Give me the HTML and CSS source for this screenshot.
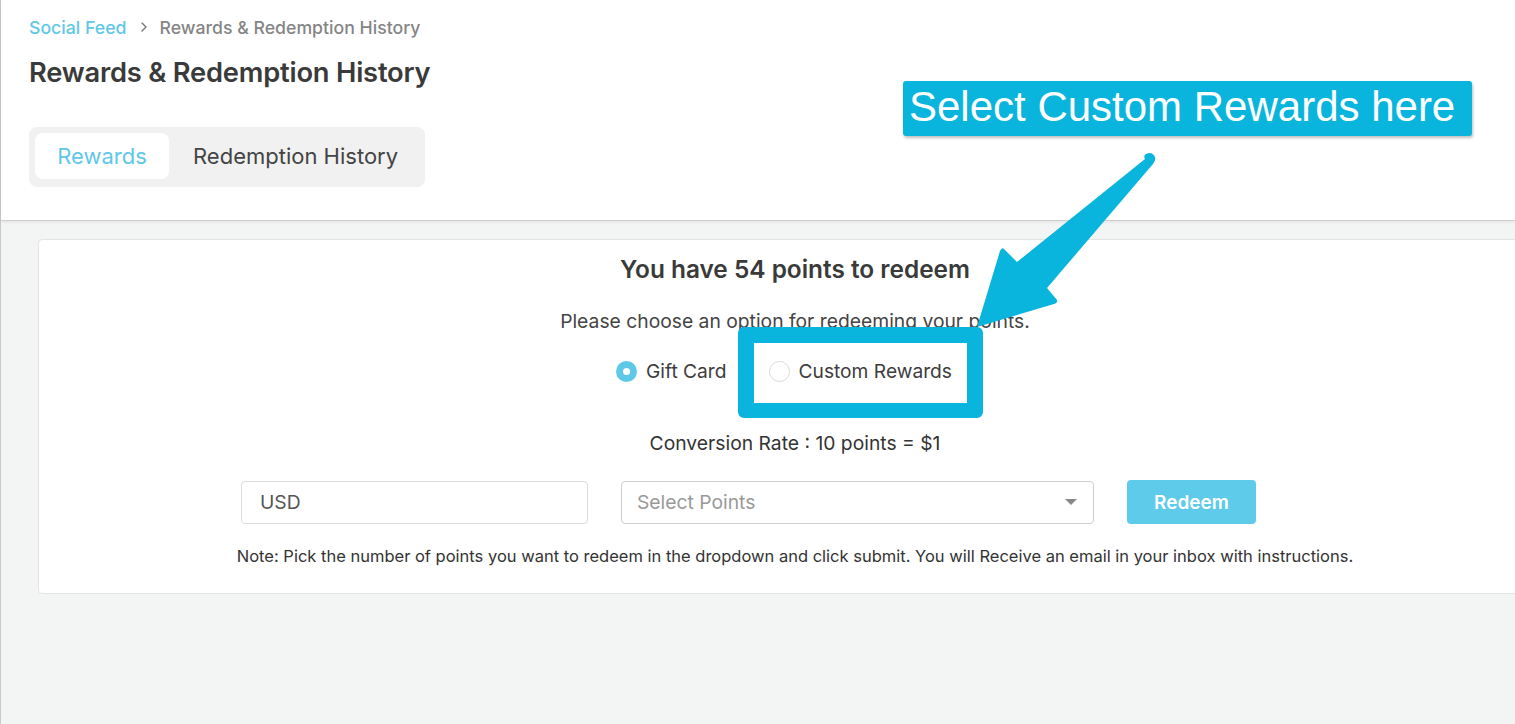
FILE: index.html
```html
<!DOCTYPE html>
<html lang="en">
<head>
<meta charset="utf-8">
<title>Rewards &amp; Redemption History</title>
<link rel="stylesheet" href="styles.css">
</head>
<body>
<div class="page">
  <header class="header">
    <nav class="crumbs">
      <a class="crumb-link" href="#">Social Feed</a>
      <svg class="crumb-sep" width="10" height="12" viewBox="0 0 10 12"><path d="M3 2l4 4-4 4" fill="none" stroke="#777" stroke-width="1.4" stroke-linecap="round" stroke-linejoin="round"/></svg>
      <span class="crumb-current">Rewards &amp; Redemption History</span>
    </nav>
    <h1 class="title">Rewards &amp; Redemption History</h1>
    <div class="tabs">
      <button class="tab tab-active">Rewards</button>
      <button class="tab tab-history">Redemption History</button>
    </div>
  </header>
  <main class="main">
    <section class="card">
      <h2 class="points">You have 54 points to redeem</h2>
      <p class="choose">Please choose an option for redeeming your points.</p>
      <div class="options">
        <label class="option"><span class="radio radio-on"></span>Gift Card</label>
        <label class="option"><span class="radio"></span>Custom Rewards</label>
      </div>
      <p class="rate">Conversion Rate : 10 points = $1</p>
      <div class="form-row">
        <div class="field field-usd">USD</div>
        <div class="field field-select"><span class="placeholder">Select Points</span><span class="caret"></span></div>
        <button class="redeem">Redeem</button>
      </div>
      <p class="note">Note: Pick the number of points you want to redeem in the dropdown and click submit. You will Receive an email in your inbox with instructions.</p>
    </section>
  </main>
</div>
<div class="callout">Select Custom Rewards here</div>
<svg class="arrow" width="1515" height="724" viewBox="0 0 1515 724">
  <path d="M1146 154 Q1152 151 1155 157 Q1156 160 1153 164 L1047 288 L1057 300 Q1058 303 1054 304 L977 327 L1000 251 Q1002 246 1005 250 L1017 262 L1145 159 Q1143 156 1146 154 Z" fill="#09b5dd"/>
</svg>
<div class="highlight"></div>
</body>
</html>
```
FILE: styles.css
```css
* { box-sizing: border-box; }
html, body { margin: 0; padding: 0; }
body {
  width: 1515px;
  height: 724px;
  overflow: hidden;
  font-family: Inter, "Noto Sans", Arial, sans-serif;
  background: #f3f4f4;
  color: #3a3a3a;
  position: relative;
}
.page {
  border-left: 1px solid #c9c9c9;
  min-height: 724px;
}
.header {
  background: #fff;
  height: 221px;
  padding: 15px 0 0 28px;
  border-bottom: 1px solid #cfcfcf;
  box-shadow: 0 1px 3px rgba(0,0,0,0.08);
}
.crumbs {
  display: flex;
  align-items: center;
  height: 24px;
  font-size: 17.7px;
  font-weight: 500;
}
.crumb-link { color: #5fc8e8; text-decoration: none; }
.crumb-sep { margin: 0 11px 0 12px; }
.crumb-current { color: #858585; }
.title {
  margin: 17px 0 0 0;
  font-size: 27.3px;
  font-weight: 600;
  color: #3a3a3a;
  line-height: 34px;
  letter-spacing: -0.2px;
}
.tabs {
  display: inline-flex;
  margin-top: 37px;
  padding: 6px 6px 8px 6px;
  background: #f1f1f1;
  border-radius: 8px;
}
.tab {
  font-family: inherit;
  font-size: 22px;
  border: none;
  background: transparent;
  color: #444;
  height: 46px;
  border-radius: 8px;
}
.tab-active {
  background: #fff;
  color: #5fc8e8;
  width: 134px;
  padding: 0;
}
.tab-history {
  padding: 0 21px 0 24px;
}
.main {
  padding: 18px 0 0 37px;
}
.card {
  width: 1514px;
  height: 355px;
  background: #fff;
  border: 1px solid #e3e3e3;
  border-radius: 4px;
  text-align: center;
  padding-top: 14px;
}
.points {
  margin: 0;
  font-size: 24.4px;
  font-weight: 600;
  line-height: 30px;
  color: #3a3a3a;
}
.choose {
  margin: 25px 0 0 0;
  font-size: 19.3px;
  line-height: 24px;
  color: #444;
}
.options {
  display: flex;
  justify-content: center;
  gap: 42px;
  margin-top: 25px;
  padding-right: 22px;
}
.option {
  display: flex;
  align-items: center;
  gap: 9px;
  font-size: 19.2px;
  line-height: 26px;
  color: #3d3d3d;
}
.radio {
  width: 21px;
  height: 21px;
  border-radius: 50%;
  border: 1px solid #dadada;
  background: #fff;
}
.radio-on {
  border: 7px solid #5fc8e8;
  background: #fff;
}
.rate {
  margin: 47px 0 0 0;
  font-size: 19.3px;
  line-height: 24px;
  color: #333;
}
.form-row {
  display: flex;
  align-items: center;
  gap: 33px;
  margin-top: 25px;
  padding-left: 202px;
}
.field {
  height: 43px;
  border: 1px solid #dcdcdc;
  border-radius: 4px;
  display: flex;
  align-items: center;
  font-size: 19.3px;
  text-align: left;
}
.field-usd {
  width: 347px;
  padding-left: 18px;
  color: #555;
}
.field-select {
  width: 473px;
  padding: 0 16px 0 15px;
  justify-content: space-between;
  border-color: #cfcfcf;
}
.placeholder { color: #999; }
.caret {
  width: 0;
  height: 0;
  border-left: 6px solid transparent;
  border-right: 6px solid transparent;
  border-top: 6px solid #888;
}
.redeem {
  width: 129px;
  height: 44px;
  border: none;
  border-radius: 4px;
  background: #5fcbea;
  color: #fff;
  font-family: inherit;
  font-size: 19px;
  font-weight: 600;
}
.note {
  margin: 21px 0 0 0;
  font-size: 16.5px;
  line-height: 22px;
  color: #333;
}
.callout {
  position: absolute;
  left: 903px;
  top: 81px;
  width: 569px;
  height: 55px;
  background: #09b5dd;
  border-radius: 3px;
  box-shadow: 1px 2px 3px rgba(0,0,0,0.25);
  color: #fff;
  font-family: "Liberation Sans", Arial, sans-serif;
  font-size: 42px;
  line-height: 51px;
  padding-left: 6px;
  white-space: nowrap;
}
.arrow {
  position: absolute;
  left: 0;
  top: 0;
  pointer-events: none;
}
.highlight {
  position: absolute;
  left: 738px;
  top: 327px;
  width: 245px;
  height: 91px;
  border: 16px solid #09b5dd;
  border-bottom-width: 15px;
  border-radius: 6px;
}
```
